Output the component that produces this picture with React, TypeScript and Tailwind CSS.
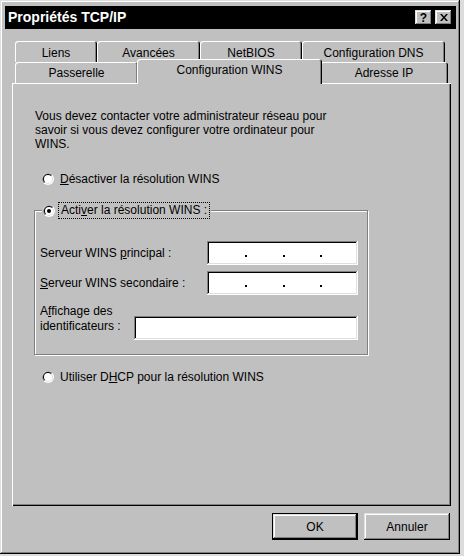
import React from 'react';

const raised =
  'shadow-[inset_-1px_-1px_#000,inset_1px_1px_#dfdfdf,inset_-2px_-2px_#808080,inset_2px_2px_#fff]';
const sunken =
  'shadow-[inset_-1px_-1px_#fff,inset_1px_1px_#808080,inset_-2px_-2px_#dfdfdf,inset_2px_2px_#000]';
const tabEdge = 'shadow-[inset_1px_1px_#fff,inset_-1px_0_#000,inset_-2px_0_#808080]';

const Radio: React.FC<{ checked?: boolean }> = ({ checked }) => (
  <svg width="12" height="12" viewBox="0 0 12 12" className="shrink-0">
    <circle cx="6" cy="6" r="6" fill="#fff" />
    <path d="M1.76 10.24 A6 6 0 0 1 10.24 1.76 Z" fill="#808080" />
    <circle cx="6" cy="6" r="5" fill="#dfdfdf" />
    <path d="M2.46 9.54 A5 5 0 0 1 9.54 2.46 Z" fill="#000" />
    <circle cx="6" cy="6" r="4" fill="#fff" />
    {checked && <circle cx="6" cy="6" r="2" fill="#000" />}
  </svg>
);

const Tab: React.FC<{ label: string; width: number; className?: string }> = ({ label, width, className = '' }) => (
  <div
    className={`h-[21px] flex items-center justify-center rounded-t-[3px] bg-[#c0c0c0] ${tabEdge} ${className}`}
    style={{ width }}
  >
    {label}
  </div>
);

const IpField: React.FC = () => (
  <div className={`w-[151px] h-[24px] bg-white grid grid-cols-4 items-center pt-[6px] ${sunken}`}>
    <span />
    <span className="justify-self-start w-[2px] h-[2px] bg-black" />
    <span className="justify-self-start w-[2px] h-[2px] bg-black" />
    <span className="justify-self-start w-[2px] h-[2px] bg-black" />
  </div>
);

export default function App() {
  return (
    <div className="w-[464px] h-[556px] bg-[#dcdcdc] font-['Liberation_Sans',Arial,sans-serif] text-[12px] text-black">
      <div className={`w-[460px] h-[554px] bg-[#c0c0c0] pt-[6px] pl-[5px] pr-[4px] flex flex-col ${raised}`}>
        {/* Title bar */}
        <div className="h-[23px] bg-black flex items-center justify-between pl-[3px] pr-[4px]">
          <span className="text-white font-bold text-[14px]">Propriétés TCP/IP</span>
          <div className="flex gap-[3px]">
            <div className={`w-[17px] h-[15px] bg-[#c0c0c0] flex items-center justify-center font-bold text-[12px] leading-none ${raised}`}>
              ?
            </div>
            <div className={`w-[17px] h-[15px] bg-[#c0c0c0] flex items-center justify-center ${raised}`}>
              <svg width="8" height="7" viewBox="0 0 8 7">
                <path d="M0 0h2l2 2.5L6 0h2L5 3.5 8 7H6L4 4.5 2 7H0l3-3.5z" fill="#000" />
              </svg>
            </div>
          </div>
        </div>

        {/* Tabs */}
        <div className="mt-[12px] ml-[7px] w-[439px] flex flex-col">
          <div className="flex ml-[3px]">
            <Tab label="Liens" width={82} className="pt-[3px]" />
            <Tab label="Avancées" width={103} className="pt-[3px]" />
            <Tab label="NetBIOS" width={102} className="pt-[3px]" />
            <Tab label="Configuration DNS" width={143} className="pt-[3px]" />
          </div>
          <div className="flex items-end h-[24px] -mt-[3px] ml-[3px]">
            <Tab label="Passerelle" width={123} />
            <div
              className={`relative z-10 h-[25px] -mb-px -ml-px -mr-[2px] pb-[3px] flex items-center justify-center rounded-t-[3px] bg-[#c0c0c0] ${tabEdge}`}
              style={{ width: 185 }}
            >
              Configuration WINS
            </div>
            <Tab label="Adresse IP" width={128} />
          </div>

          {/* Panel */}
          <div className="h-[423px] bg-[#c0c0c0] pt-[26px] pl-[23px] pr-[10px] flex flex-col shadow-[inset_1px_1px_#fff,inset_-1px_-1px_#000,inset_-2px_-2px_#808080]">
            <p className="leading-[14px]">
              Vous devez contacter votre administrateur réseau pour
              <br />
              savoir si vous devez configurer votre ordinateur pour
              <br />
              WINS.
            </p>

            <div className="mt-[20px] ml-[7px] flex items-center gap-[6px] h-[16px]">
              <Radio />
              <span>
                <u>D</u>ésactiver la résolution WINS
              </span>
            </div>

            {/* Group box */}
            <div className="relative mt-[23px] -ml-px w-[334px] h-[145px] border border-[#808080] shadow-[inset_1px_1px_#fff,1px_1px_#fff] pl-[5px] pr-[9px] pt-[30px] flex flex-col">
              <div className="absolute -top-[9px] left-[7px] bg-[#c0c0c0] flex items-center gap-[3px] pl-[1px] pr-[1px]">
                <Radio checked />
                <span className="border border-dotted border-black px-[2px] leading-[15px]">
                  Acti<u>v</u>er la résolution WINS :
                </span>
              </div>

              <div className="flex items-center justify-between h-[24px]">
                <span>
                  Serveur WINS <u>p</u>rincipal :
                </span>
                <IpField />
              </div>
              <div className="flex items-center justify-between h-[24px] mt-[6px]">
                <span>
                  <u>S</u>erveur WINS secondaire :
                </span>
                <IpField />
              </div>
              <div className="flex items-start justify-between mt-[9px]">
                <span className="leading-[15px]">
                  A<u>f</u>fichage des
                  <br />
                  identificateurs :
                </span>
                <div className={`w-[224px] h-[24px] mt-[12px] bg-white ${sunken}`} />
              </div>
            </div>

            <div className="mt-[14px] ml-[7px] flex items-center gap-[6px] h-[16px]">
              <Radio />
              <span>
                Utiliser D<u>H</u>CP pour la résolution WINS
              </span>
            </div>
          </div>

          {/* Buttons */}
          <div className="mt-[7px] flex justify-end gap-[6px] pr-[1px]">
            <div className="w-[86px] h-[27px] border border-black">
              <div className={`w-full h-full flex items-center justify-center ${raised}`}>OK</div>
            </div>
            <div className={`w-[86px] h-[27px] flex items-center justify-center ${raised}`}>Annuler</div>
          </div>
        </div>
      </div>
    </div>
  );
}
